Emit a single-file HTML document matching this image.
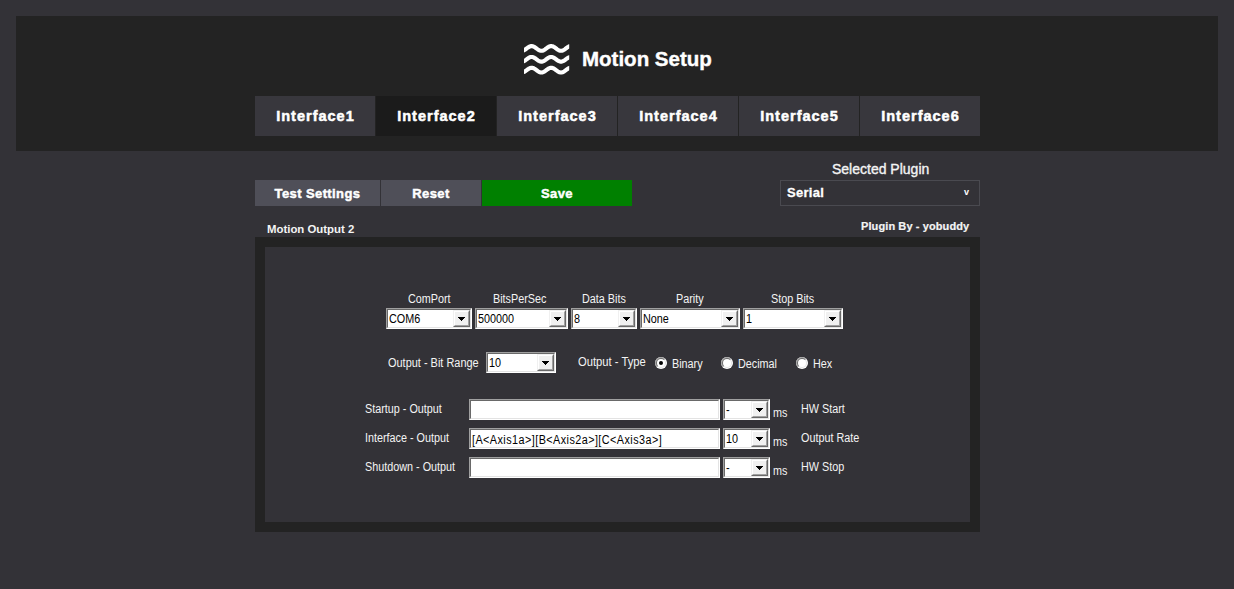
<!DOCTYPE html>
<html><head><meta charset="utf-8">
<style>
*{margin:0;padding:0;box-sizing:border-box}
html,body{width:1234px;height:589px;overflow:hidden;background:#333237;font-family:"Liberation Sans",sans-serif}
.a{position:absolute}
#hdr{left:16px;top:16px;width:1202px;height:135px;background:#232323}
.title{left:582px;top:47px;font-size:20.5px;font-weight:bold;color:#fff;-webkit-text-stroke:.4px #fff;white-space:nowrap;line-height:24px}
.tab{top:96px;width:120px;height:40px;background:#38373d;color:#fff;font-weight:bold;font-size:14.5px;letter-spacing:1px;text-indent:1px;-webkit-text-stroke:.5px #fff;text-align:center;line-height:40px}
.tab.on{background:#1b1b1b}
.btn{top:180px;height:26px;background:#4f4f58;color:#fff;font-weight:bold;font-size:13px;letter-spacing:.4px;-webkit-text-stroke:.45px #fff;text-align:center;line-height:28px}
.bl{color:#f4f4f4;font-size:11px;font-weight:bold;white-space:nowrap;line-height:13px}
.lbl{color:#f4f4f4;font-size:12px;white-space:nowrap;line-height:0;height:0;transform:scaleX(0.9);transform-origin:0 0}
.lbl>span{display:inline-block;vertical-align:baseline}
#panel{left:255px;top:237px;width:725px;height:295px;background:#232323}
#inner{left:265px;top:247px;width:705px;height:275px;background:#333237}
.sunk{background:#fff;border-top:1px solid #a0a0a0;border-left:1px solid #a0a0a0;border-right:1px solid #fff;border-bottom:1px solid #fff}
.sunk>.in{position:absolute;left:0;top:0;right:0;bottom:0;border-top:1px solid #696969;border-left:1px solid #696969;border-right:1px solid #e3e3e3;border-bottom:1px solid #e3e3e3}
.cb{height:21px}
.cb .dd{position:absolute;right:1px;top:1px;width:17px;bottom:1px;background:#f0f0f0;border-top:1px solid #f0f0f0;border-left:1px solid #f0f0f0;border-right:1px solid #696969;border-bottom:1px solid #696969}
.cb .dd>i{position:absolute;left:0;top:0;right:0;bottom:0;border-top:1px solid #fff;border-left:1px solid #fff;border-right:1px solid #a0a0a0;border-bottom:1px solid #a0a0a0}
.cb .dd>i>svg{position:absolute;left:3px;top:5px}
.tx{position:absolute;color:#000;font-size:12px;line-height:0;height:0;white-space:nowrap;transform:scaleX(0.9);transform-origin:0 0}
.radio{width:13px;height:13px;border-radius:50%;background:#fff;border:1px solid #a0a0a0}
.dot{position:absolute;left:3px;top:3px;width:5px;height:5px;border-radius:50%;background:#000}
</style></head><body>
<svg width="0" height="0" style="position:absolute"><defs><clipPath id="tl"><polygon points="0,0 12,0 0,12"/></clipPath></defs></svg>
<div id="hdr" class="a"></div>
<svg class="a" style="left:520px;top:40px" width="54" height="40" viewBox="0 0 54 40"><defs><clipPath id="wc"><rect x="4" y="0" width="45.2" height="40"/></clipPath></defs><g clip-path="url(#wc)" fill="none" stroke="#fff" stroke-width="4.15" stroke-linejoin="round"><path d="M1.0,10.72 L1.5,10.79 L2.0,10.80 L2.5,10.74 L3.0,10.63 L3.5,10.46 L4.0,10.24 L4.5,9.97 L5.0,9.67 L5.5,9.33 L6.0,8.97 L6.5,8.60 L7.0,8.22 L7.5,7.85 L8.0,7.50 L8.5,7.17 L9.0,6.87 L9.5,6.61 L10.0,6.40 L10.5,6.24 L11.0,6.14 L11.5,6.10 L12.0,6.12 L12.5,6.20 L13.0,6.33 L13.5,6.52 L14.0,6.76 L14.5,7.04 L15.0,7.36 L15.5,7.71 L16.0,8.07 L16.5,8.45 L17.0,8.83 L17.5,9.19 L18.0,9.54 L18.5,9.86 L19.0,10.14 L19.5,10.38 L20.0,10.57 L20.5,10.70 L21.0,10.78 L21.5,10.80 L22.0,10.76 L22.5,10.66 L23.0,10.50 L23.5,10.29 L24.0,10.03 L24.5,9.73 L25.0,9.40 L25.5,9.05 L26.0,8.68 L26.5,8.30 L27.0,7.93 L27.5,7.57 L28.0,7.23 L28.5,6.93 L29.0,6.66 L29.5,6.44 L30.0,6.27 L30.5,6.16 L31.0,6.10 L31.5,6.11 L32.0,6.18 L32.5,6.30 L33.0,6.48 L33.5,6.71 L34.0,6.98 L34.5,7.30 L35.0,7.64 L35.5,8.00 L36.0,8.37 L36.5,8.75 L37.0,9.12 L37.5,9.47 L38.0,9.79 L38.5,10.08 L39.0,10.33 L39.5,10.53 L40.0,10.68 L40.5,10.77 L41.0,10.80 L41.5,10.77 L42.0,10.68 L42.5,10.53 L43.0,10.33 L43.5,10.08 L44.0,9.79 L44.5,9.47 L45.0,9.12 L45.5,8.75 L46.0,8.37 L46.5,8.00 L47.0,7.64 L47.5,7.30 L48.0,6.98 L48.5,6.71 L49.0,6.48 L49.5,6.30 L50.0,6.18 L50.5,6.11 L51.0,6.10 L51.5,6.16 L52.0,6.27"/><path d="M1.0,21.57 L1.5,21.64 L2.0,21.65 L2.5,21.59 L3.0,21.48 L3.5,21.31 L4.0,21.09 L4.5,20.82 L5.0,20.52 L5.5,20.18 L6.0,19.82 L6.5,19.45 L7.0,19.07 L7.5,18.70 L8.0,18.35 L8.5,18.02 L9.0,17.72 L9.5,17.46 L10.0,17.25 L10.5,17.09 L11.0,16.99 L11.5,16.95 L12.0,16.97 L12.5,17.05 L13.0,17.18 L13.5,17.37 L14.0,17.61 L14.5,17.89 L15.0,18.21 L15.5,18.56 L16.0,18.92 L16.5,19.30 L17.0,19.68 L17.5,20.04 L18.0,20.39 L18.5,20.71 L19.0,20.99 L19.5,21.23 L20.0,21.42 L20.5,21.55 L21.0,21.63 L21.5,21.65 L22.0,21.61 L22.5,21.51 L23.0,21.35 L23.5,21.14 L24.0,20.88 L24.5,20.58 L25.0,20.25 L25.5,19.90 L26.0,19.53 L26.5,19.15 L27.0,18.78 L27.5,18.42 L28.0,18.08 L28.5,17.78 L29.0,17.51 L29.5,17.29 L30.0,17.12 L30.5,17.01 L31.0,16.95 L31.5,16.96 L32.0,17.03 L32.5,17.15 L33.0,17.33 L33.5,17.56 L34.0,17.83 L34.5,18.15 L35.0,18.49 L35.5,18.85 L36.0,19.22 L36.5,19.60 L37.0,19.97 L37.5,20.32 L38.0,20.64 L38.5,20.93 L39.0,21.18 L39.5,21.38 L40.0,21.53 L40.5,21.62 L41.0,21.65 L41.5,21.62 L42.0,21.53 L42.5,21.38 L43.0,21.18 L43.5,20.93 L44.0,20.64 L44.5,20.32 L45.0,19.97 L45.5,19.60 L46.0,19.22 L46.5,18.85 L47.0,18.49 L47.5,18.15 L48.0,17.83 L48.5,17.56 L49.0,17.33 L49.5,17.15 L50.0,17.03 L50.5,16.96 L51.0,16.95 L51.5,17.01 L52.0,17.12"/><path d="M1.0,32.42 L1.5,32.49 L2.0,32.50 L2.5,32.44 L3.0,32.33 L3.5,32.16 L4.0,31.94 L4.5,31.67 L5.0,31.37 L5.5,31.03 L6.0,30.67 L6.5,30.30 L7.0,29.92 L7.5,29.55 L8.0,29.20 L8.5,28.87 L9.0,28.57 L9.5,28.31 L10.0,28.10 L10.5,27.94 L11.0,27.84 L11.5,27.80 L12.0,27.82 L12.5,27.90 L13.0,28.03 L13.5,28.22 L14.0,28.46 L14.5,28.74 L15.0,29.06 L15.5,29.41 L16.0,29.77 L16.5,30.15 L17.0,30.53 L17.5,30.89 L18.0,31.24 L18.5,31.56 L19.0,31.84 L19.5,32.08 L20.0,32.27 L20.5,32.40 L21.0,32.48 L21.5,32.50 L22.0,32.46 L22.5,32.36 L23.0,32.20 L23.5,31.99 L24.0,31.73 L24.5,31.43 L25.0,31.10 L25.5,30.75 L26.0,30.38 L26.5,30.00 L27.0,29.63 L27.5,29.27 L28.0,28.93 L28.5,28.63 L29.0,28.36 L29.5,28.14 L30.0,27.97 L30.5,27.86 L31.0,27.80 L31.5,27.81 L32.0,27.88 L32.5,28.00 L33.0,28.18 L33.5,28.41 L34.0,28.68 L34.5,29.00 L35.0,29.34 L35.5,29.70 L36.0,30.07 L36.5,30.45 L37.0,30.82 L37.5,31.17 L38.0,31.49 L38.5,31.78 L39.0,32.03 L39.5,32.23 L40.0,32.38 L40.5,32.47 L41.0,32.50 L41.5,32.47 L42.0,32.38 L42.5,32.23 L43.0,32.03 L43.5,31.78 L44.0,31.49 L44.5,31.17 L45.0,30.82 L45.5,30.45 L46.0,30.07 L46.5,29.70 L47.0,29.34 L47.5,29.00 L48.0,28.68 L48.5,28.41 L49.0,28.18 L49.5,28.00 L50.0,27.88 L50.5,27.81 L51.0,27.80 L51.5,27.86 L52.0,27.97"/></g></svg>
<div class="a title">Motion Setup</div>

<div class="a tab" style="left:255px">Interface1</div>
<div class="a tab on" style="left:376px">Interface2</div>
<div class="a tab" style="left:497px">Interface3</div>
<div class="a tab" style="left:618px">Interface4</div>
<div class="a tab" style="left:739px">Interface5</div>
<div class="a tab" style="left:860px">Interface6</div>

<div class="a btn" style="left:255px;width:125px">Test Settings</div>
<div class="a btn" style="left:381px;width:100px">Reset</div>
<div class="a btn" style="left:482px;width:150px;background:#008000">Save</div>

<div class="a bl" style="left:832px;top:163px;font-size:14px;font-weight:normal;-webkit-text-stroke:.35px #f4f4f4">Selected Plugin</div>
<div class="a" style="left:780px;top:180px;width:200px;height:26px;border:1px solid #4a4a50"></div>
<div class="a bl" style="left:787px;top:186px;font-size:13px;color:#fff;letter-spacing:.3px;-webkit-text-stroke:.3px #fff">Serial</div>
<div class="a bl" style="left:964px;top:186px;font-size:9px;color:#fff">v</div>

<div class="a bl" style="left:267px;top:223px;font-size:11.4px">Motion Output 2</div>
<div class="a bl" style="left:861px;top:220px;letter-spacing:.1px;-webkit-text-stroke:.2px #f4f4f4">Plugin By - yobuddy</div>

<div id="panel" class="a"></div>
<div id="inner" class="a"></div>
<div class="a lbl" style="left:408px;top:299px;">ComPort</div>
<div class="a lbl" style="left:493px;top:299px;">BitsPerSec</div>
<div class="a lbl" style="left:582px;top:299px;">Data Bits</div>
<div class="a lbl" style="left:676px;top:299px;">Parity</div>
<div class="a lbl" style="left:771px;top:299px;">Stop Bits</div>
<div class="a sunk cb" style="left:386px;top:308px;width:86px"><div class="in"></div><span class="tx" style="left:2px;top:10px">COM6</span><div class="dd"><i><svg width="7" height="4" shape-rendering="crispEdges"><path d="M0 0h7v1h-1v1h-1v1h-1v1h-1v-1h-1v-1h-1v-1h-1z" fill="#000"/></svg></i></div></div>
<div class="a sunk cb" style="left:475px;top:308px;width:93px"><div class="in"></div><span class="tx" style="left:2px;top:10px">500000</span><div class="dd"><i><svg width="7" height="4" shape-rendering="crispEdges"><path d="M0 0h7v1h-1v1h-1v1h-1v1h-1v-1h-1v-1h-1v-1h-1z" fill="#000"/></svg></i></div></div>
<div class="a sunk cb" style="left:571px;top:308px;width:66px"><div class="in"></div><span class="tx" style="left:2px;top:10px">8</span><div class="dd"><i><svg width="7" height="4" shape-rendering="crispEdges"><path d="M0 0h7v1h-1v1h-1v1h-1v1h-1v-1h-1v-1h-1v-1h-1z" fill="#000"/></svg></i></div></div>
<div class="a sunk cb" style="left:640px;top:308px;width:100px"><div class="in"></div><span class="tx" style="left:2px;top:10px">None</span><div class="dd"><i><svg width="7" height="4" shape-rendering="crispEdges"><path d="M0 0h7v1h-1v1h-1v1h-1v1h-1v-1h-1v-1h-1v-1h-1z" fill="#000"/></svg></i></div></div>
<div class="a sunk cb" style="left:743px;top:308px;width:100px"><div class="in"></div><span class="tx" style="left:2px;top:10px">1</span><div class="dd"><i><svg width="7" height="4" shape-rendering="crispEdges"><path d="M0 0h7v1h-1v1h-1v1h-1v1h-1v-1h-1v-1h-1v-1h-1z" fill="#000"/></svg></i></div></div>
<div class="a lbl" style="left:388px;top:363px;transform:scaleX(.912)">Output - Bit Range</div>
<div class="a sunk cb" style="left:486px;top:352px;width:70px"><div class="in"></div><span class="tx" style="left:2px;top:10px">10</span><div class="dd"><i><svg width="7" height="4" shape-rendering="crispEdges"><path d="M0 0h7v1h-1v1h-1v1h-1v1h-1v-1h-1v-1h-1v-1h-1z" fill="#000"/></svg></i></div></div>
<div class="a lbl" style="left:578px;top:362px;transform:scaleX(.935)">Output - Type</div>
<svg class="a" style="left:655px;top:357px" width="12" height="12"><circle cx="6" cy="6" r="6" fill="#fff"/><circle cx="6" cy="6" r="6" fill="#a0a0a0" clip-path="url(#tl)"/><circle cx="6" cy="6" r="5" fill="#e3e3e3"/><circle cx="6" cy="6" r="5" fill="#696969" clip-path="url(#tl)"/><circle cx="6" cy="6" r="4" fill="#fff"/><circle cx="6" cy="6" r="2" fill="#000"/></svg>
<div class="a lbl" style="left:672px;top:364px;">Binary</div>
<svg class="a" style="left:721px;top:357px" width="12" height="12"><circle cx="6" cy="6" r="6" fill="#fff"/><circle cx="6" cy="6" r="6" fill="#a0a0a0" clip-path="url(#tl)"/><circle cx="6" cy="6" r="5" fill="#e3e3e3"/><circle cx="6" cy="6" r="5" fill="#696969" clip-path="url(#tl)"/><circle cx="6" cy="6" r="4" fill="#fff"/></svg>
<div class="a lbl" style="left:738px;top:364px;">Decimal</div>
<svg class="a" style="left:796px;top:357px" width="12" height="12"><circle cx="6" cy="6" r="6" fill="#fff"/><circle cx="6" cy="6" r="6" fill="#a0a0a0" clip-path="url(#tl)"/><circle cx="6" cy="6" r="5" fill="#e3e3e3"/><circle cx="6" cy="6" r="5" fill="#696969" clip-path="url(#tl)"/><circle cx="6" cy="6" r="4" fill="#fff"/></svg>
<div class="a lbl" style="left:813px;top:364px;">Hex</div>
<div class="a lbl" style="left:365px;top:409px;">Startup - Output</div>
<div class="a lbl" style="left:365px;top:438px;">Interface - Output</div>
<div class="a lbl" style="left:365px;top:467px;">Shutdown - Output</div>
<div class="a sunk" style="left:469px;top:399px;width:251px;height:21px"><div class="in"></div></div>
<div class="a sunk" style="left:469px;top:428px;width:251px;height:21px"><div class="in"></div><span class="tx" style="left:2px;top:11px;letter-spacing:.5px">[A&lt;Axis1a&gt;][B&lt;Axis2a&gt;][C&lt;Axis3a&gt;]</span></div>
<div class="a sunk" style="left:469px;top:457px;width:251px;height:21px"><div class="in"></div></div>
<div class="a sunk cb" style="left:723px;top:399px;width:47px"><div class="in"></div><span class="tx" style="left:2px;top:10px">-</span><div class="dd"><i><svg width="7" height="4" shape-rendering="crispEdges"><path d="M0 0h7v1h-1v1h-1v1h-1v1h-1v-1h-1v-1h-1v-1h-1z" fill="#000"/></svg></i></div></div>
<div class="a sunk cb" style="left:723px;top:428px;width:47px"><div class="in"></div><span class="tx" style="left:2px;top:10px">10</span><div class="dd"><i><svg width="7" height="4" shape-rendering="crispEdges"><path d="M0 0h7v1h-1v1h-1v1h-1v1h-1v-1h-1v-1h-1v-1h-1z" fill="#000"/></svg></i></div></div>
<div class="a sunk cb" style="left:723px;top:457px;width:47px"><div class="in"></div><span class="tx" style="left:2px;top:10px">-</span><div class="dd"><i><svg width="7" height="4" shape-rendering="crispEdges"><path d="M0 0h7v1h-1v1h-1v1h-1v1h-1v-1h-1v-1h-1v-1h-1z" fill="#000"/></svg></i></div></div>
<div class="a lbl" style="left:773px;top:413px;">ms</div>
<div class="a lbl" style="left:773px;top:442px;">ms</div>
<div class="a lbl" style="left:773px;top:471px;">ms</div>
<div class="a lbl" style="left:801px;top:409px;">HW Start</div>
<div class="a lbl" style="left:801px;top:438px;">Output Rate</div>
<div class="a lbl" style="left:801px;top:467px;">HW Stop</div>
</body></html>
